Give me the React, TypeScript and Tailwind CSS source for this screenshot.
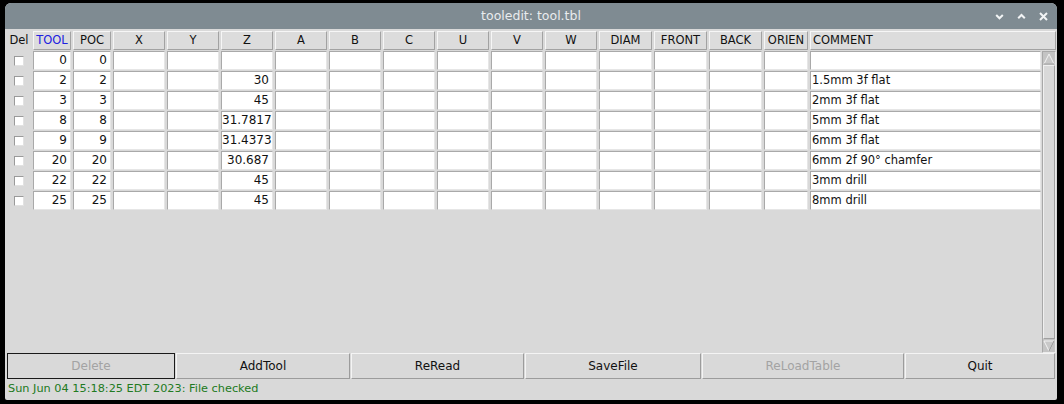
import React from "react";

const FONT = { fontFamily: '"DejaVu Sans", "Liberation Sans", sans-serif' };

const cols: { name: string; blue?: boolean }[] = [
  { name: "Del" },
  { name: "TOOL", blue: true },
  { name: "POC" },
  { name: "X" },
  { name: "Y" },
  { name: "Z" },
  { name: "A" },
  { name: "B" },
  { name: "C" },
  { name: "U" },
  { name: "V" },
  { name: "W" },
  { name: "DIAM" },
  { name: "FRONT" },
  { name: "BACK" },
  { name: "ORIEN" },
  { name: "COMMENT" },
];

const rows: { tool: string; z: string; comment: string }[] = [
  { tool: "0", z: "", comment: "" },
  { tool: "2", z: "30", comment: "1.5mm 3f flat" },
  { tool: "3", z: "45", comment: "2mm 3f flat" },
  { tool: "8", z: "31.7817", comment: "5mm 3f flat" },
  { tool: "9", z: "31.4373", comment: "6mm 3f flat" },
  { tool: "20", z: "30.687", comment: "6mm 2f 90° chamfer" },
  { tool: "22", z: "45", comment: "3mm drill" },
  { tool: "25", z: "45", comment: "8mm drill" },
];

const GRID =
  "grid grid-cols-[24px_38px_38px_52px_52px_52px_52px_52px_52px_52px_52px_52px_53px_53px_53px_44px_1fr] gap-x-[2px]";

function Cell({ text = "", right = false, small = false }: { text?: string; right?: boolean; small?: boolean }) {
  return (
    <div
      className={`h-[19px] bg-white border border-t-[#a9a9a9] border-l-[#a9a9a9] border-b-[#e6e6e6] border-r-[#e6e6e6] ${
        small ? "text-[11.5px]" : "text-[12px]"
      } leading-[17px] text-[#111] whitespace-nowrap overflow-hidden ${
        right ? "text-right pr-[3px]" : "text-left pl-[1px]"
      }`}
    >
      {text}
    </div>
  );
}

function Btn({ label, w, disabled, focus }: { label: string; w: string; disabled?: boolean; focus?: boolean }) {
  return (
    <div
      className={`${w} h-[26px] flex items-center justify-center text-[12px] bg-[#d9d9d9] ${
        focus
          ? "border border-[#1a1a1a]"
          : "border border-t-[#f4f4f4] border-l-[#f4f4f4] border-b-[#9c9c9c] border-r-[#9c9c9c]"
      } ${disabled ? "text-[#a3a3a3]" : "text-[#111]"}`}
    >
      {label}
    </div>
  );
}

export default function App() {
  return (
    <div className="w-[1064px] h-[404px] bg-black pt-[3px] pl-[5px]" style={FONT}>
      <div className="w-[1052px] h-[397px] bg-[#d9d9d9] rounded-t-[6px] rounded-b-[2px] flex flex-col overflow-hidden">
        {/* title bar */}
        <div className="h-[26px] bg-[#7f8b92] relative flex items-center justify-center shrink-0">
          <span className="text-[12.5px] text-[#e9ecee]">tooledit: tool.tbl</span>
          <div className="absolute right-[9px] top-0 h-full flex items-center gap-[13px]">
            <svg width="9" height="9" viewBox="0 0 9 9">
              <path d="M1.2 3 L4.5 6.3 L7.8 3" stroke="#f2f4f5" strokeWidth="2" fill="none" />
            </svg>
            <svg width="9" height="9" viewBox="0 0 9 9">
              <path d="M1.2 6.3 L4.5 3 L7.8 6.3" stroke="#f2f4f5" strokeWidth="2" fill="none" />
            </svg>
            <svg width="9" height="9" viewBox="0 0 9 9">
              <path d="M1 1 L8 8 M8 1 L1 8" stroke="#f2f4f5" strokeWidth="2" fill="none" />
            </svg>
          </div>
        </div>

        <div className="flex flex-col pl-[2px] pr-[1px]">
          {/* header */}
          <div className={`${GRID} mt-[2px]`}>
            {cols.map((c) =>
              c.name === "Del" ? (
                <div key={c.name} className="h-[19px] text-[11.5px] leading-[19px] text-[#111] text-center">
                  Del
                </div>
              ) : (
                <div
                  key={c.name}
                  className={`h-[19px] bg-[#dcdcdc] border border-t-[#f6f6f6] border-l-[#f6f6f6] border-b-[#a2a2a2] border-r-[#a2a2a2] text-[11.5px] leading-[17px] whitespace-nowrap overflow-hidden ${
                    c.name === "COMMENT" ? "text-left pl-[2px]" : "text-center"
                  } ${c.blue ? "text-[#2020e0]" : "text-[#111]"}`}
                >
                  {c.name}
                </div>
              )
            )}
          </div>

          {/* table + scrollbar */}
          <div className="flex mt-[1px] h-[302px] gap-[1px]">
            <div className="w-[1034px] flex flex-col gap-[1px]">
              {rows.map((r, i) => (
                <div key={i} className={GRID}>
                  <div className="h-[19px] flex items-center justify-center">
                    <div className="w-[10px] h-[10px] bg-white border border-t-[#9a9a9a] border-l-[#9a9a9a] border-b-[#e2e2e2] border-r-[#e2e2e2]" />
                  </div>
                  <Cell text={r.tool} right />
                  <Cell text={r.tool} right />
                  <Cell />
                  <Cell />
                  <Cell text={r.z} right />
                  <Cell />
                  <Cell />
                  <Cell />
                  <Cell />
                  <Cell />
                  <Cell />
                  <Cell />
                  <Cell />
                  <Cell />
                  <Cell />
                  <Cell text={r.comment} small />
                </div>
              ))}
            </div>
            <div className="w-[14px] h-full bg-[#c4c4c4] flex flex-col border border-t-[#a8a8a8] border-l-[#a8a8a8] border-b-[#ececec] border-r-[#ececec]">
              <div className="h-[13px] flex items-center justify-center shrink-0">
                <svg width="12" height="12" viewBox="0 0 12 12">
                  <polygon points="6,1 11,11 1,11" fill="#c8c8c8" stroke="#f2f2f2" strokeWidth="1" />
                  <path d="M11 11 L1 11" stroke="#8e8e8e" strokeWidth="1" />
                </svg>
              </div>
              <div className="flex-1 bg-[#d9d9d9] border border-t-[#f0f0f0] border-l-[#f0f0f0] border-b-[#a0a0a0] border-r-[#a0a0a0]" />
              <div className="h-[13px] flex items-center justify-center shrink-0">
                <svg width="12" height="12" viewBox="0 0 12 12">
                  <polygon points="1,1 11,1 6,11" fill="#c8c8c8" stroke="#f2f2f2" strokeWidth="1" />
                  <path d="M11 1 L6 11" stroke="#8e8e8e" strokeWidth="1" />
                </svg>
              </div>
            </div>
          </div>

          {/* buttons */}
          <div className="flex gap-[1px]">
            <Btn label="Delete" w="w-[168px]" disabled focus />
            <Btn label="AddTool" w="w-[174px]" />
            <Btn label="ReRead" w="w-[173px]" />
            <Btn label="SaveFile" w="w-[176px]" />
            <Btn label="ReLoadTable" w="w-[202px]" disabled />
            <Btn label="Quit" w="w-[150px]" />
          </div>

          {/* status */}
          <div className="h-[20px] text-[11.3px] leading-[20px] text-[#217a21] pl-[1px]">
            Sun Jun 04 15:18:25 EDT 2023: File checked
          </div>
        </div>
      </div>
    </div>
  );
}
